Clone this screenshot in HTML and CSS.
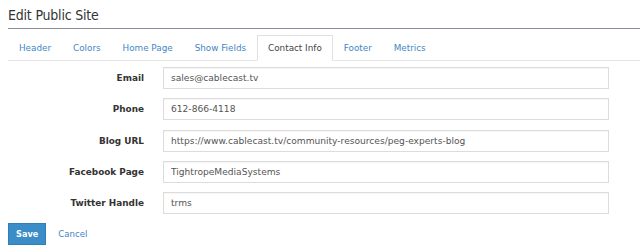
FILE: index.html
```html
<!DOCTYPE html>
<html>
<head>
<meta charset="utf-8">
<link rel="stylesheet" href="styles.css">
</head>
<body>
<div class="page">
  <h1 class="title">Edit Public Site</h1>
  <ul class="tabs">
    <li><a class="tab">Header</a></li>
    <li><a class="tab">Colors</a></li>
    <li><a class="tab">Home Page</a></li>
    <li><a class="tab">Show Fields</a></li>
    <li><a class="tab active">Contact Info</a></li>
    <li><a class="tab">Footer</a></li>
    <li><a class="tab">Metrics</a></li>
  </ul>
  <form class="form">
    <label class="label">Email</label>
    <input class="field" type="text" value="sales@cablecast.tv">
    <label class="label">Phone</label>
    <input class="field" type="text" value="612-866-4118">
    <label class="label">Blog URL</label>
    <input class="field" type="text" value="https://www.cablecast.tv/community-resources/peg-experts-blog">
    <label class="label">Facebook Page</label>
    <input class="field" type="text" value="TightropeMediaSystems">
    <label class="label">Twitter Handle</label>
    <input class="field" type="text" value="trms">
  </form>
  <div class="actions">
    <button class="btn" type="button">Save</button>
    <a class="cancel">Cancel</a>
  </div>
</div>
</body>
</html>
```

FILE: styles.css
```css
html, body {
  margin: 0;
  padding: 0;
  background: #fff;
}
body {
  font-family: "DejaVu Sans", Verdana, sans-serif;
  color: #333;
}
.page {
  margin-left: 8px;
  padding-top: 6px;
}
.title {
  margin: 0;
  font-family: "DejaVu Sans Condensed", "DejaVu Sans", Verdana, sans-serif;
  font-size: 14px;
  letter-spacing: -0.2px;
  font-weight: normal;
  line-height: 18px;
  padding-bottom: 4px;
  border-bottom: 1px solid #8e8c9a;
  color: #333;
}
.tabs {
  list-style: none;
  margin: 6px 0 0 0;
  padding: 0;
  display: flex;
  border-bottom: 1px solid #e4e4e4;
}
.tabs li {
  margin-bottom: -1px;
}
.tab {
  display: block;
  font-size: 8.8px;
  line-height: 24px;
  padding: 0 10px;
  border: 1px solid transparent;
  color: #3f87c6;
}
.tab.active {
  color: #444;
  border-color: #e0e0e0;
  border-bottom-color: #fff;
  background: #fff;
}
.form {
  margin: 6px 0 0 0;
  display: grid;
  grid-template-columns: 140px 446px;
  column-gap: 15px;
  row-gap: 9.25px;
  align-items: center;
}
.label {
  text-align: right;
  padding-right: 4px;
  font-weight: bold;
  font-size: 8.9px;
  color: #333;
}
.field {
  box-sizing: border-box;
  height: 22px;
  width: 446px;
  margin: 0;
  padding: 0 7px;
  border: 1px solid #dcdcdc;
  box-shadow: inset 0 1px 1px rgba(0,0,0,0.04);
  font-family: "DejaVu Sans", Verdana, sans-serif;
  font-size: 9.1px;
  color: #555;
  outline: none;
}
.actions {
  margin-top: 9px;
  display: flex;
  align-items: center;
  gap: 12px;
}
.btn {
  box-sizing: border-box;
  height: 22px;
  padding: 0 7px;
  background: #3a8dc6;
  border: 1px solid #2f7fb8;
  color: #fff;
  font-family: "DejaVu Sans", Verdana, sans-serif;
  font-weight: bold;
  font-size: 8.2px;
}
.cancel {
  font-size: 8.6px;
  color: #3f87c6;
}
```
